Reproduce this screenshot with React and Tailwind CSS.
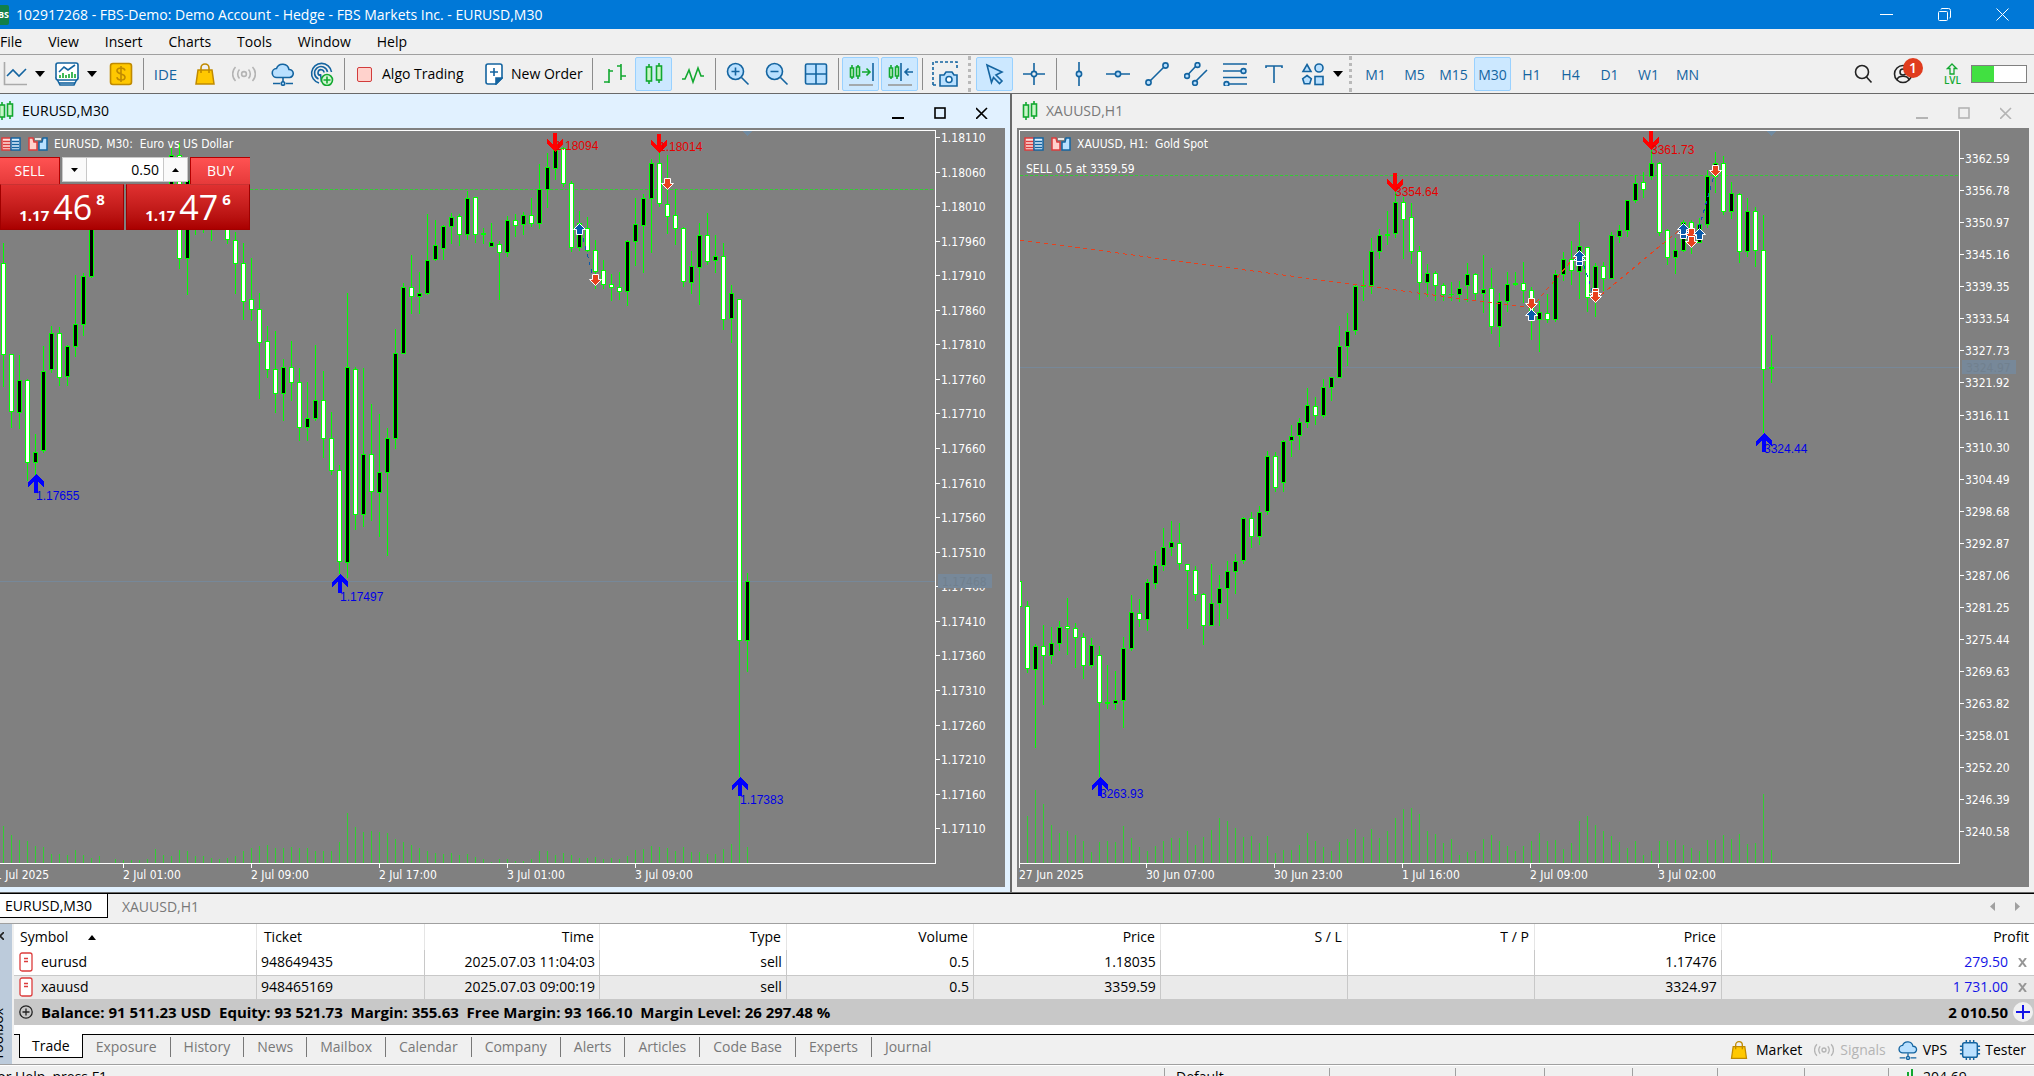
import React, { useState } from 'react';

const BLUE = '#1464a0';
const LIGHT = '#b9e0ff';
const GREEN = '#12a830';

// [high, bodyTop, bodyBottom, low, kind] - kind: 'w' bear, 'b' bull, 'd' doji
const EURUSD = [
    [243, 263, 355, 387, 'w'], [354, 354, 412, 428, 'w'], [355, 380, 413, 429, 'b'], [379, 380, 463, 481, 'w'],
    [434, 452, 463, 475, 'b'], [346, 371, 451, 453, 'b'], [326, 333, 370, 373, 'b'], [327, 333, 378, 386, 'w'],
    [345, 346, 377, 386, 'b'], [275, 324, 347, 357, 'b'], [273, 276, 325, 336, 'b'], [190, 200, 277, 278, 'b'],
    null, null, null, null, null, null, null, null, null,
    [147, 155, 200, 220, 'b'], [143, 155, 259, 269, 'w'], [160, 180, 259, 295, 'b'], [160, 190, 220, 235, 'b'],
    [160, 190, 220, 233, 'w'], [160, 190, 220, 241, 'b'], null, [190, 200, 240, 244, 'w'],
    [232, 240, 264, 294, 'w'], [243, 263, 302, 320, 'w'], [258, 299, 310, 321, 'w'], [293, 309, 343, 399, 'w'],
    [326, 341, 370, 378, 'w'], [331, 369, 394, 413, 'w'], [359, 367, 394, 421, 'b'], [341, 367, 383, 401, 'w'],
    [368, 382, 428, 441, 'w'], [382, 418, 428, 441, 'b'], [345, 400, 419, 421, 'b'], [371, 400, 439, 458, 'w'],
    [412, 438, 471, 475, 'w'], [465, 470, 562, 574, 'w'], [293, 367, 563, 578, 'b'], [367, 369, 515, 530, 'w'],
    [368, 454, 515, 527, 'b'], [404, 454, 492, 521, 'w'], [414, 472, 493, 537, 'b'], [428, 438, 473, 556, 'b'],
    [329, 353, 439, 449, 'b'], [283, 287, 354, 354, 'b'], [255, 287, 297, 314, 'w'], [272, 293, 297, 314, 'b'],
    [214, 260, 294, 295, 'b'], [220, 245, 260, 261, 'b'], [225, 226, 249, 260, 'b'], [213, 217, 227, 244, 'b'],
    [214, 216, 235, 246, 'w'], [191, 198, 235, 240, 'b'], [197, 197, 235, 243, 'w'], [228, 233, 235, 244, 'd'],
    [223, 242, 247, 247, 'b'], [241, 244, 253, 300, 'w'], [216, 220, 253, 257, 'b'], [214, 220, 226, 237, 'w'],
    [212, 215, 225, 235, 'b'], [198, 215, 224, 227, 'w'], [164, 189, 224, 229, 'b'], [153, 167, 190, 208, 'b'],
    [140, 145, 169, 180, 'b'], [147, 148, 184, 187, 'w'], [181, 183, 248, 252, 'w'], [211, 223, 248, 251, 'b'],
    [217, 228, 251, 252, 'w'], [240, 250, 272, 289, 'w'], [260, 270, 285, 289, 'w'], [274, 284, 288, 301, 'w'],
    [272, 287, 292, 300, 'w'], [240, 241, 292, 306, 'b'], [198, 224, 242, 266, 'b'], [194, 198, 226, 273, 'b'],
    [159, 163, 199, 253, 'b'], [152, 163, 204, 207, 'w'], [155, 204, 217, 234, 'w'], [189, 215, 229, 245, 'w'],
    [227, 228, 282, 287, 'w'], [251, 266, 283, 294, 'b'], [223, 235, 268, 305, 'b'], [213, 235, 262, 265, 'w'],
    [235, 256, 261, 273, 'b'], [243, 256, 320, 330, 'w'], [285, 293, 319, 343, 'b'], [299, 299, 641, 777, 'w'],
    [573, 581, 641, 672, 'b'],
];

const EURUSD_VOL = [
    37, 28, 23, 22, 17, 16, 9, 9, 8, 13, 8, 5, 7, 0, 4, 3, 3, 3, 4, 14, 8, 7, 13, 12, 7, 7, 5, 4, 5, 7, 12, 15, 17, 18,
    15, 15, 16, 15, 15, 12, 12, 12, 21, 50, 36, 31, 32, 31, 30, 24, 21, 18, 15, 12, 10, 9, 10, 8, 9, 6, 4, 1, 4, 4, 2,
    2, 4, 12, 12, 8, 10, 8, 5, 5, 6, 4, 5, 4, 7, 13, 14, 17, 16, 15, 12, 16, 11, 11, 9, 9, 14, 19, 73, 16,
];

const XAUUSD = [
    [581, 581, 607, 607, 'w'], [601, 606, 669, 673, 'w'], [644, 646, 670, 748, 'b'], [625, 646, 656, 705, 'w'],
    [627, 643, 656, 664, 'b'], [621, 627, 644, 651, 'b'], [598, 626, 629, 655, 'w'], [623, 628, 638, 668, 'w'],
    [633, 637, 666, 679, 'w'], [638, 645, 666, 668, 'b'], [646, 655, 703, 777, 'w'], [665, 702, 704, 709, 'd'],
    [671, 700, 704, 710, 'b'], [637, 648, 701, 728, 'b'], [595, 612, 649, 651, 'b'], [599, 613, 620, 627, 'w'],
    [579, 582, 620, 631, 'b'], [551, 565, 584, 589, 'b'], [528, 547, 566, 571, 'b'], [521, 542, 548, 556, 'b'],
    [523, 543, 564, 570, 'w'], [564, 564, 571, 629, 'w'], [566, 570, 595, 601, 'w'], [593, 594, 626, 645, 'w'],
    [564, 603, 626, 626, 'b'], [575, 588, 604, 626, 'b'], [561, 571, 589, 619, 'b'], [554, 561, 572, 594, 'b'],
    [517, 518, 561, 564, 'b'], [512, 518, 537, 548, 'w'], [506, 512, 537, 545, 'b'], [451, 456, 512, 515, 'b'],
    [452, 456, 488, 492, 'w'], [440, 441, 483, 492, 'b'], [425, 436, 441, 457, 'b'], [418, 422, 436, 450, 'b'],
    [388, 405, 423, 428, 'b'], [397, 406, 416, 425, 'w'], [379, 387, 416, 418, 'b'], [377, 377, 388, 401, 'b'],
    [326, 346, 378, 378, 'b'], [313, 331, 347, 366, 'b'], [284, 286, 331, 335, 'b'], [270, 285, 287, 301, 'd'],
    [238, 251, 286, 294, 'b'], [229, 235, 252, 259, 'b'], [211, 234, 236, 245, 'd'], [191, 202, 234, 238, 'b'],
    [197, 202, 220, 259, 'w'], [203, 217, 252, 264, 'w'], [246, 251, 283, 300, 'w'], [264, 273, 283, 297, 'b'],
    [271, 273, 286, 301, 'w'], [283, 285, 295, 301, 'w'], [282, 294, 295, 301, 'd'], [281, 288, 295, 302, 'b'],
    [263, 274, 286, 302, 'b'], [273, 274, 294, 301, 'w'], [255, 289, 294, 313, 'b'], [268, 288, 327, 334, 'w'],
    [293, 301, 327, 347, 'b'], [272, 284, 302, 312, 'b'], [272, 283, 285, 286, 'd'], [262, 283, 291, 303, 'w'],
    [287, 290, 317, 340, 'w'], [301, 312, 320, 352, 'b'], [294, 313, 320, 323, 'w'], [270, 274, 320, 322, 'b'],
    [252, 259, 275, 281, 'b'], [241, 259, 271, 285, 'w'], [222, 246, 272, 299, 'b'], [247, 247, 298, 312, 'w'],
    [263, 266, 297, 317, 'b'], [262, 266, 279, 291, 'w'], [232, 235, 279, 279, 'b'], [225, 230, 237, 243, 'b'],
    [200, 200, 231, 237, 'b'], [175, 183, 201, 203, 'b'], [172, 182, 190, 198, 'w'], [150, 163, 177, 180, 'b'],
    [162, 163, 233, 236, 'w'], [229, 230, 258, 265, 'w'], [238, 250, 258, 274, 'b'], [220, 222, 251, 252, 'b'],
    [220, 222, 245, 254, 'w'], [218, 224, 243, 243, 'b'], [170, 176, 225, 228, 'b'], [152, 163, 177, 193, 'b'],
    [156, 163, 212, 215, 'w'], [182, 193, 212, 219, 'b'], [193, 194, 252, 263, 'w'], [198, 211, 252, 257, 'b'],
    [207, 211, 251, 267, 'w'], [215, 250, 370, 433, 'w'], [335, 367, 369, 383, 'd'],
];

const XAUUSD_VOL = [
    0, 47, 73, 59, 38, 30, 32, 28, 22, 11, 21, 22, 21, 37, 25, 16, 12, 17, 22, 25, 25, 32, 18, 26, 33, 45, 42, 35, 26,
    27, 20, 27, 10, 13, 13, 18, 30, 22, 16, 12, 21, 24, 34, 26, 34, 25, 32, 45, 54, 55, 49, 32, 29, 20, 24, 8, 11, 12,
    24, 28, 22, 17, 12, 17, 22, 30, 22, 23, 14, 20, 42, 47, 38, 32, 27, 21, 15, 22, 8, 12, 22, 22, 23, 18, 15, 12, 23,
    23, 28, 24, 29, 19, 20, 69, 13,
];

const CHARTS = [
    {
        id: 'EURUSD,M30',
        header: 'EURUSD, M30:\u00a0 Euro vs US Dollar',
        x0: 3,
        candles: EURUSD,
        volumes: EURUSD_VOL,
        bid: 581,
        bidText: '1.17468',
        order: 189,
        shift: 747,
        signals: [
            { x: 555, y: 133, label: '1.18094', dy: 17 },
            { x: 659, y: 134, label: '1.18014', dy: 17 },
            { x: 36, y: 474, label: '1.17655', dy: 26, up: true },
            { x: 340, y: 574, label: '1.17497', dy: 27, up: true },
            { x: 740, y: 777, label: '1.17383', dy: 27, up: true },
        ],
        lines: [['#0a5aaa', 579, 223, 595, 284]],
        deals: [[667, 183], [579, 229, true], [595, 279]],
        scale: Array.from({ length: 21 }, (_, i) => [Math.round(137 + i * 34.56), (1.1811 - i * 0.0005).toFixed(5)]),
        times: [[-5, '1 Jul 2025'], [123, '2 Jul 01:00'], [251, '2 Jul 09:00'], [379, '2 Jul 17:00'], [507, '3 Jul 01:00'], [635, '3 Jul 09:00']],
    },
    {
        id: 'XAUUSD,H1',
        header: 'XAUUSD, H1:\u00a0 Gold Spot',
        x0: -1,
        candles: XAUUSD,
        volumes: XAUUSD_VOL,
        bid: 367,
        bidText: '3324.97',
        order: 175,
        orderText: 'SELL 0.5 at 3359.59',
        shift: 751,
        signals: [
            { x: 375, y: 173, label: '3354.64', dy: 23 },
            { x: 631, y: 131, label: '3361.73', dy: 23 },
            { x: 744, y: 433, label: '3324.44', dy: 20, up: true },
            { x: 80, y: 777, label: '3263.93', dy: 21, up: true },
        ],
        lines: [
            ['#e8401c', 0, 240, 511, 308], ['#e8401c', 511, 308, 559, 252], ['#e8401c', 575, 300, 663, 227],
            ['#0a5aaa', 559, 250, 575, 300], ['#0a5aaa', 663, 227, 671, 245], ['#0a5aaa', 679, 228, 695, 172],
        ],
        deals: [[511, 303], [511, 315, true], [559, 260, true], [559, 256, true], [575, 293], [575, 296], [663, 233, true], [663, 229, true], [671, 233], [671, 241], [679, 234, true], [695, 170]],
        scale: Array.from({ length: 22 }, (_, i) => [Math.round(158 + i * 32.07), (3362.59 - i * 5.81).toFixed(2)]),
        times: [[0, '27 Jun 2025'], [127, '30 Jun 07:00'], [255, '30 Jun 23:00'], [383, '1 Jul 16:00'], [511, '2 Jul 09:00'], [639, '3 Jul 02:00']],
    },
];

const CHART_FONT = "font-['DejaVu_Sans_Condensed','DejaVu_Sans',sans-serif]";

const Svg = ({ w = 24, h = 24, children, ...rest }) => (
    <svg width={w} height={h} viewBox={`0 0 ${w} ${h}`} fill="none" stroke={BLUE} strokeWidth="1.6" className="shrink-0" aria-hidden="true" {...rest}>
        {children}
    </svg>
);

const Caret = () => (
    <Svg w={10} h={6} stroke="none"><path d="M0 0h10l-5 6z" fill="#000" /></Svg>
);

const BagIcon = ({ size = 24 }) => (
    <Svg width={size} height={size} stroke="#c08a00">
        <path d="M5 8h14l2 14H3z" fill="#ffc800" strokeWidth="1.5" />
        <path d="M8 11V6a4 4 0 0 1 8 0v5" />
    </Svg>
);

const SignalIcon = ({ size = 24 }) => (
    <Svg width={size} height={size} stroke="#b4b4b4">
        <circle cx="12" cy="12" r="2.4" />
        <path d="M7.5 7.5a6.500 6.500 0 0 0 0 9M16.500 7.500a6.500 6.500 0 0 1 0 9M3.500 5a10 10 0 0 0 0 14M20.500 5a10 10 0 0 1 0 14" />
    </Svg>
);

const CloudIcon = ({ size = 24 }) => (
    <Svg width={size} height={size}>
        <path d="M6 15.500a4.500 4.500 0 0 1-.5-9A6.500 6.500 0 0 1 18 7.500a4 4 0 0 1 .5 8z" fill={LIGHT} />
        <path d="M12 16v4M2 21.500h7M15 21.500h7" />
        <circle cx="12" cy="21.500" r="1.800" fill={LIGHT} />
    </Svg>
);

const ChipIcon = () => (
    <Svg w={24} h={24} width={22} height={22}>
        <path d="M8 1v22M12 1v22M16 1v22M1 8h22M1 12h22M1 16h22" />
        <rect x="4" y="4" width="16" height="16" rx="2" fill={LIGHT} />
    </Svg>
);

const CandlesIcon = () => (
    <Svg stroke={GREEN}>
        <path d="M7 2v20M17 1v20" />
        <rect x="4.500" y="5" width="5" height="14" fill="#c8f5c8" />
        <rect x="14.500" y="4" width="5" height="14" fill="#c8f5c8" />
    </Svg>
);

const ICONS = {
    line: <Svg><path d="M1.500 0v22.500H24" stroke="#aaa" /><path d="M4 14l6-6 6 6 7-7" /></Svg>,
    indicators: (
        <Svg w={24} h={26}>
            <path d="M1 16l4 8h14l4-8" fill="#fff" /><path d="M4 22h16" />
            <rect x="1" y="2" width="22" height="17" rx="2" fill="#fff" />
            <path d="M4 11l5-5 4 3 7-5" />
            <path d="M5 17v-3M8 17v-5M11 17v-3M14 17v-4M17 17v-6M20 17v-4" stroke={GREEN} />
        </Svg>
    ),
    dollar: (
        <Svg stroke="#c08a00">
            <rect x="1.500" y="1.500" width="21" height="21" rx="2.500" fill="#ffc800" />
            <path d="M16 8.500c-.5-2-2-2.500-4-2.500-2.500 0-4 1-4 2.800C8 13 16 11 16 15.200c0 1.800-1.500 2.800-4 2.800-2.200 0-3.800-.8-4-2.800M12 4v16" />
        </Svg>
    ),
    bag: <BagIcon />,
    signal: <SignalIcon />,
    cloud: <CloudIcon />,
    globe: (
        <Svg>
            <path d="M9 21A10 10 0 1 1 21.500 10M8.500 17A6.500 6.500 0 1 1 17.500 10M10 13.500A3 3 0 1 1 14 10.500M10.500 12l1 8" />
            <circle cx="17" cy="18" r="5.500" stroke={GREEN} fill="#d5f7d5" /><path d="M17 14.500v7M13.500 18h7" stroke={GREEN} />
        </Svg>
    ),
    bars: <Svg stroke={GREEN}><path d="M6 7v14M6 9h4M1 20h5M18 2v16M18 14h5M14 4h4" /></Svg>,
    candles: <CandlesIcon />,
    zigzag: <Svg stroke={GREEN}><path d="M1 17h3l4-9 4 12 5-14 3 8h3" /></Svg>,
    zoomIn: <Svg><circle cx="9.500" cy="9.500" r="8" fill={LIGHT} /><path d="M15.500 15.500l7 7M5.500 9.500h8M9.500 5.500v8" /></Svg>,
    zoomOut: <Svg><circle cx="9.500" cy="9.500" r="8" fill={LIGHT} /><path d="M15.500 15.500l7 7M5.500 9.500h8" /></Svg>,
    grid: <Svg><rect x="1.500" y="2" width="21" height="20" rx="1.500" fill={LIGHT} /><path d="M12 2v20M1.500 12h21" /></Svg>,
    scroll: (
        <Svg w={26} h={24}>
            <path d="M4 3v14M10 3v14" stroke={GREEN} /><path d="M2.500 6h3v9h-3zM8.500 5h3v9h-3z" stroke={GREEN} fill="#c8f5c8" />
            <path d="M14 10h8M18.500 6.500l3.500 3.500-3.500 3.500" stroke={GREEN} /><path d="M25 1v18" /><path d="M1 23h24" stroke="#999" />
        </Svg>
    ),
    shift: (
        <Svg w={26} h={24}>
            <path d="M4 3v14M10 3v14" stroke={GREEN} /><path d="M2.500 6h3v9h-3zM8.500 5h3v9h-3z" stroke={GREEN} fill="#c8f5c8" />
            <path d="M14 1v18M26 10h-8M21.500 6.500L18 10l3.500 3.500" /><path d="M1 23h24" stroke="#999" />
        </Svg>
    ),
    camera: (
        <Svg w={26} h={26}>
            <path d="M1 24V1h24v8M1 24h5" strokeDasharray="3 2" />
            <path d="M8 14h4l2-3h6l2 3h3v11H8z" fill={LIGHT} /><circle cx="17" cy="18.500" r="3" fill="#fff" />
        </Svg>
    ),
    cursor: <Svg><path d="M4 3l15 7-6 3 6 6-2.500 2.500-6-6-2 5z" fill={LIGHT} /></Svg>,
    cross: <Svg><path d="M12 1v8M12 15v8M1 12h8M15 12h8" /><circle cx="12" cy="12" r="2.600" /></Svg>,
    vline: <Svg><path d="M12 0v9M12 15v9" /><circle cx="12" cy="12" r="2.600" fill={LIGHT} /></Svg>,
    hline: <Svg><path d="M0 12h9M15 12h9" /><circle cx="12" cy="12" r="2.600" fill={LIGHT} /></Svg>,
    trend: <Svg><path d="M5 19L19 5" /><circle cx="3.500" cy="20.500" r="2.600" fill={LIGHT} /><circle cx="20.500" cy="3.500" r="2.600" fill={LIGHT} /></Svg>,
    channel: (
        <Svg>
            <path d="M4.500 12L12 4M12 19L23 8" />
            <circle cx="3" cy="14" r="2.400" fill={LIGHT} /><circle cx="13.500" cy="3" r="2.400" fill={LIGHT} /><circle cx="11" cy="21" r="2.400" fill={LIGHT} />
        </Svg>
    ),
    fibo: (
        <Svg>
            <path d="M0 2h24M0 9h18M0 15.500h24M6 22h18" />
            <circle cx="20.500" cy="9" r="2.400" fill={LIGHT} /><circle cx="3.500" cy="22" r="2.400" fill={LIGHT} />
        </Svg>
    ),
    text: <Svg><path d="M4 6V4h16v2M12 4v17" /></Svg>,
    shapes: (
        <Svg>
            <path d="M6 2.500l4 7H2z" fill={LIGHT} /><circle cx="18" cy="6" r="4" fill={LIGHT} />
            <path d="M6 13.500l4.300 3.200-1.600 5H3.300l-1.600-5z" fill={LIGHT} /><rect x="14" y="14.500" width="8" height="8" fill={LIGHT} />
        </Svg>
    ),
};

const ToolButton = ({ icon, label, active, children }) => (
    <button
        type="button"
        aria-label={label}
        className={`h-[34px] w-[37px] mx-px shrink-0 flex items-center justify-center rounded-[2px] border ${active ? 'bg-[#cce8ff] border-[#99d1ff]' : 'border-transparent'}`}
    >
        {icon ? ICONS[icon] : children}
    </button>
);

const Sep = () => <span className="w-px h-8 ml-[3px] mr-[2px] shrink-0 bg-[#8c8c8c]" />;
const Grip = () => <span className="w-0 h-9 mx-1 shrink-0 border-l-[3px] border-dotted border-[#b9b9b9]" />;

const Toolbar = () => {
    const [frame, setFrame] = useState('M30');
    return (
        <div className="h-[39px] shrink-0 flex items-center border-b border-[#696969] pr-[7px] text-[#1464a0]">
            <button type="button" aria-label="Chart type" className="flex items-center gap-2 pl-[3px] w-[55px]">{ICONS.line}<Caret /></button>
            <button type="button" aria-label="Indicators" className="flex items-center gap-2 w-[46px]">{ICONS.indicators}<Caret /></button>
            <ToolButton icon="dollar" label="Symbols" />
            <Sep />
            <ToolButton label="MetaEditor"><span className="text-[15px]">IDE</span></ToolButton>
            <ToolButton icon="bag" label="Market" />
            <ToolButton icon="signal" label="Signals" />
            <ToolButton icon="cloud" label="VPS" />
            <ToolButton icon="globe" label="Web" />
            <Sep />
            <button type="button" className="flex items-center gap-[10px] w-[127px] pl-[10px] text-black">
                <span className="size-[15px] rounded-[2px] border border-[#d23c3c] bg-[#ffd2cc]" />Algo Trading
            </button>
            <button type="button" className="flex items-center gap-2 w-[115px] pl-[11px] text-black">
                <Svg w={18} h={22}>
                    <path d="M3 1h12a2 2 0 0 1 2 2v12l-6 6H3a2 2 0 0 1-2-2V3a2 2 0 0 1 2-2z" fill="#fff" />
                    <path d="M17 15h-6v6zM9 5v8M5 9h8" fill={BLUE} />
                </Svg>
                New Order
            </button>
            <Sep />
            <ToolButton icon="bars" label="Bar chart" />
            <ToolButton icon="candles" label="Candlesticks" active />
            <ToolButton icon="zigzag" label="Line chart" />
            <Sep />
            <ToolButton icon="zoomIn" label="Zoom in" />
            <ToolButton icon="zoomOut" label="Zoom out" />
            <ToolButton icon="grid" label="Tile windows" />
            <Sep />
            <ToolButton icon="scroll" label="Auto scroll" active />
            <ToolButton icon="shift" label="Chart shift" active />
            <Sep />
            <ToolButton icon="camera" label="Screenshot" />
            <Grip />
            <ToolButton icon="cursor" label="Cursor" active />
            <ToolButton icon="cross" label="Crosshair" />
            <Sep />
            <ToolButton icon="vline" label="Vertical line" />
            <ToolButton icon="hline" label="Horizontal line" />
            <ToolButton icon="trend" label="Trendline" />
            <ToolButton icon="channel" label="Channel" />
            <ToolButton icon="fibo" label="Fibonacci" />
            <ToolButton icon="text" label="Text" />
            <button type="button" aria-label="Objects" className="flex items-center gap-2 w-[52px] pl-2">{ICONS.shapes}<Caret /></button>
            <Grip />
            {['M1', 'M5', 'M15', 'M30', 'H1', 'H4', 'D1', 'W1', 'MN'].map((f) => (
                <button
                    key={f}
                    type="button"
                    onClick={() => setFrame(f)}
                    className={`w-[37px] mx-px h-[34px] pt-[2px] rounded-[2px] border ${f === frame ? 'bg-[#cce8ff] border-[#99d1ff]' : 'border-transparent'}`}
                >
                    {f}
                </button>
            ))}
            <div className="ml-auto flex items-center">
                <button type="button" aria-label="Search" className="mr-5">
                    <Svg w={20} h={20} stroke="#222"><circle cx="9" cy="8" r="6.500" /><path d="M13.500 13l5 5.500" /></Svg>
                </button>
                <button type="button" aria-label="Account" className="relative mr-[31px]">
                    <Svg w={20} h={20} stroke="#222"><circle cx="10" cy="10" r="8.500" /><circle cx="10" cy="8" r="3" /><path d="M4 16c1-5 11-5 12 0" /></Svg>
                    <span className="absolute -top-[6px] left-[10px] size-[20px] rounded-full bg-[#e03c1e] text-white font-semibold leading-[20px] text-center">1</span>
                </button>
                <span className="flex flex-col items-center mr-[10px] text-[#12a830] text-[10px] leading-[10px] font-semibold">
                    <Svg w={12} h={12} stroke={GREEN}><path d="M6 1l4.500 4.500H8V11H4V5.500H1.500z" strokeWidth="1.300" /></Svg>
                    LVL
                </span>
                <span className="w-[56px] h-[18px] border border-[#808080] bg-white flex"><span className="w-[22px] bg-[#41e041]" /></span>
            </div>
        </div>
    );
};

const SignalArrow = ({ x, y, label, dy, up }) => (
    <g fill={up ? '#0000ff' : '#ff0000'}>
        <path
            d={up
                ? `M${x} ${y}l8 8v5l-6-5v11h-4v-11l-6 5v-5z`
                : `M${x} ${y + 19}l8 -8v-5l-6 5v-11h-4v11l-6 -5v5z`}
        />
        <text x={x} y={y + dy} className="text-[12px] font-['Liberation_Sans',sans-serif]" fill={up ? '#0000e6' : '#e60000'}>{label}</text>
    </g>
);

const Deal = ({ x, y, up }) => (
    <path
        d={up ? `M${x} ${y - 6}l6 6h-3v5h-6v-5h-3z` : `M${x} ${y + 6}l6 -6h-3v-5h-6v5h-3z`}
        fill={up ? '#0a5aaa' : '#e8401c'}
        stroke="#fff"
        transform="translate(.5 .5)"
    />
);

const Candle = ({ x, data }) => {
    const [high, top, bottom, low, kind] = data;
    return (
        <g>
            <rect x={x} y={high} width="1" height={low - high} fill="#00ff00" />
            <rect x={x - 2} y={top} width="5" height={bottom - top} fill="#00ff00" />
            {kind !== 'd' && (
                <rect x={x - 1} y={top + 1} width="3" height={Math.max(bottom - top - 2, 1)} fill={kind === 'w' ? '#fff' : '#000'} />
            )}
        </g>
    );
};

const OneClick = () => (
    <div className="absolute left-0 top-[26px] w-[250px] text-white">
        <div className="flex">
            <button type="button" className="w-[60px] shrink-0 h-[27px] bg-linear-to-b from-[#ff5252] to-[#e63a3a] border-t border-r border-[#b40000]">SELL</button>
            <div className="flex-1 min-w-0 h-[25px] mx-[2px] flex border border-[#c8c8c8] bg-white text-black">
                <button type="button" aria-label="Decrease volume" className="w-6 shrink-0 flex items-center justify-center border-r border-[#c8c8c8] bg-[#fafafa]">
                    <Svg w={7} h={4} stroke="none"><path d="M0 0h7L3.500 4z" fill="#000" /></Svg>
                </button>
                <input aria-label="Volume" defaultValue="0.50" className="flex-1 min-w-0 text-right pr-1 outline-none" />
                <button type="button" aria-label="Increase volume" className="w-6 shrink-0 flex items-center justify-center border-l border-[#c8c8c8] bg-[#fafafa]">
                    <Svg w={7} h={4} stroke="none"><path d="M0 4h7L3.500 0z" fill="#000" /></Svg>
                </button>
            </div>
            <button type="button" className="w-[60px] shrink-0 h-[27px] bg-linear-to-b from-[#ff5252] to-[#e63a3a] border-t border-l border-[#b40000]">BUY</button>
        </div>
        <div className="flex gap-[2px]">
            {[['46', '8'], ['47', '6']].map(([big, small]) => (
                <button key={big} type="button" className="flex-1 h-[46px] flex items-start justify-center bg-linear-to-b from-[#e03030] to-[#aa0000] border border-t-[#c83232] border-[#a00000] font-bold">
                    <span className="mt-5 text-[15px] leading-5">1.17</span>
                    <span className="mx-1 text-[34px] leading-[44px] font-normal">{big}</span>
                    <span className="mt-1 text-[15px] leading-5">{small}</span>
                </button>
            ))}
        </div>
    </div>
);

const WindowButtons = ({ color }) => (
    <div className="ml-auto flex items-center gap-[30px] pt-1">
        <button type="button" aria-label="Minimize"><Svg w={12} h={12} stroke={color}><path d="M0 11h12" strokeWidth="2" /></Svg></button>
        <button type="button" aria-label="Maximize"><Svg w={12} h={12} stroke={color}><rect x="1" y="1" width="10" height="10" /></Svg></button>
        <button type="button" aria-label="Close"><Svg w={12} h={12} stroke={color}><path d="M0 1l11 11M11 1L0 12" /></Svg></button>
    </div>
);

const ChartWindow = ({ chart, active }) => (
    <section className={`flex flex-col min-w-0 pb-[5px] pr-[5px] ${active ? 'bg-[#e1f1ff]' : 'bg-[#f0f0f0] border-l-2 border-[#696969] pl-[5px]'}`}>
        <header className={`h-[34px] shrink-0 flex items-center pb-px pr-[17px] ${active ? 'text-black' : 'text-[#787878] pl-[5px]'}`}>
            <Svg w={16} h={20} stroke={GREEN} className={`shrink-0 ${active ? '-ml-[2px] mr-2' : 'mr-2'}`}>
                <path d="M4 1v18M12 0v18" /><rect x="1.500" y="4" width="5" height="12" fill="#c8f5c8" /><rect x="9.500" y="3" width="5" height="12" fill="#c8f5c8" />
            </Svg>
            {chart.id}
            <WindowButtons color={active ? '#000' : '#b4b4b4'} />
        </header>
        <div className={`flex-1 min-h-0 bg-[#808080] pt-[2px] grid grid-rows-[minmax(0,1fr)_23px] grid-cols-[minmax(0,1fr)_69px] ${active ? '' : 'pl-[2px]'} ${CHART_FONT}`}>
            <div className={`relative overflow-hidden border-y border-r border-white ${active ? '' : 'border-l'}`}>
                <svg className="block w-full h-full" role="img" aria-label={chart.id} shapeRendering="crispEdges">
                    <g transform="translate(0 -131)">
                        <rect y={chart.bid} width="100%" height="1" fill="#778899" />
                        <line y1={chart.order} y2={chart.order} x2="100%" stroke="#32cd32" strokeDasharray="3 2" transform="translate(0 .5)" />
                        <path d={`M${chart.shift - 5} 131h10l-5 5z`} fill="#708aa0" />
                        {chart.volumes.map((v, i) => <rect key={i} x={chart.x0 + i * 8} y={863 - v} width="1" height={v} fill="#32cd32" />)}
                        {chart.candles.map((c, i) => c && <Candle key={i} x={chart.x0 + i * 8} data={c} />)}
                        {chart.signals.map((s) => <SignalArrow key={s.label} {...s} />)}
                        {chart.lines.map(([c, x1, y1, x2, y2]) => (
                            <line key={`${x1}-${y1}`} x1={x1} y1={y1} x2={x2} y2={y2} stroke={c} strokeDasharray="4 4" />
                        ))}
                        <g shapeRendering="auto">
                            {chart.deals.map(([x, y, up]) => <Deal key={`${x}-${y}`} x={x} y={y} up={up} />)}
                        </g>
                    </g>
                </svg>
                <div className="absolute left-0 top-0 p-[6px] text-white text-[12px] leading-[14px]">
                    <div className={`flex items-center ${active ? '-ml-[5px]' : '-ml-[2px]'}`}>
                        <Svg w={20} h={14} strokeWidth="1.500">
                            <rect x="1" y="1" width="9" height="12" fill="#ffe0dc" stroke="#dc3c3c" /><rect x="10" y="1" width="9" height="12" fill="#e0f0ff" />
                            <path d="M2 4.500h7M2 7.500h7M2 10.500h7" stroke="#dc3c3c" /><path d="M11 4.500h7M11 7.500h7M11 10.500h7" />
                        </Svg>
                        <Svg w={20} h={14} className="ml-[7px] mr-[6px]" strokeWidth="1.500">
                            <path d="M1 1h4l1 4h3v8H1z" fill="#ffd2cc" stroke="#dc3c3c" /><path d="M19 1h-4l-1 4h-3v8h8z" fill={LIGHT} />
                            <path d="M7 2h6" stroke="#e6e6e6" strokeWidth="2" />
                        </Svg>
                        {chart.header}
                    </div>
                    {chart.orderText && <div className="mt-[11px]">{chart.orderText}</div>}
                </div>
                {active && <div className="font-['Open_Sans',sans-serif]"><OneClick /></div>}
            </div>
            <svg className="block w-full h-full text-[12px]">
                <g transform="translate(0 -130)" fill="#fff">
                    {chart.scale.map(([y, price]) => (
                        <g key={price}>
                            <rect y={y} width="4" height="1" />
                            <text x="5" y={y + 5}>{price}</text>
                        </g>
                    ))}
                    <rect x="2" y={chart.bid - 7} width="54" height="14" fill="#778899" />
                    <text x="6" y={chart.bid + 5} fill="#71808e">{chart.bidText}</text>
                </g>
            </svg>
            <svg className="block w-full h-full text-[12px] col-span-2">
                <g fill="#fff">
                    {chart.times.map(([x, t]) => (
                        <g key={t}>
                            <rect x={x} width="1" height="4" />
                            <text x={x} y="15">{t}</text>
                        </g>
                    ))}
                </g>
            </svg>
        </div>
    </section>
);

const POSITIONS = [
    { symbol: 'eurusd', cells: ['948649435', '2025.07.03 11:04:03', 'sell', '0.5', '1.18035', '', '', '1.17476'], profit: '279.50' },
    { symbol: 'xauusd', cells: ['948465169', '2025.07.03 09:00:19', 'sell', '0.5', '3359.59', '', '', '3324.97'], profit: '1 731.00' },
];

const HEADERS = ['Ticket', 'Time', 'Type', 'Volume', 'Price', 'S / L', 'T / P', 'Price'];
const TABS = ['Exposure', 'History', 'News', 'Mailbox', 'Calendar', 'Company', 'Alerts', 'Articles', 'Code Base', 'Experts', 'Journal'];

const Positions = () => (
    <table className="w-full table-fixed border-collapse bg-white leading-[18px]">
        <colgroup>
            <col className="w-[12%]" />
            <col className="w-[168px]" />
            <col className="w-[175px]" />
            <col className="w-[187px]" />
            <col className="w-[187px]" />
            <col className="w-[187px]" />
            <col className="w-[187px]" />
            <col className="w-[187px]" />
            <col className="w-[187px]" />
            <col />
        </colgroup>
        <thead>
            <tr className="h-[26px]">
                <th className="font-normal text-left pl-[6px] border-r border-[#e5e5e5]">
                    <span className="flex items-center gap-5">Symbol <Svg w={8} h={5} stroke="none"><path d="M0 5h8L4 0z" fill="#000" /></Svg></span>
                </th>
                {HEADERS.map((h, i) => (
                    <th key={i} className={`font-normal border-r border-[#e5e5e5] ${i === 0 ? 'text-left pl-[7px]' : 'text-right pr-[5px]'}`}>{h}</th>
                ))}
                <th className="font-normal text-right pr-[5px]">Profit</th>
            </tr>
        </thead>
        <tbody>
            {POSITIONS.map((p, n) => (
                <tr key={p.symbol} className={n ? 'h-6 bg-[#eaeaea]' : 'h-[25px] border-b border-[#c8c8c8]'}>
                    <td className="pl-[5px] border-r border-[#c8c8c8]">
                        <span className="flex items-center gap-2">
                            <Svg w={14} h={20} stroke="#dc3c3c" strokeWidth="1.300"><rect x="1" y="1" width="12" height="18" rx="2" fill="#fff" /><path d="M5 6.500h4M5 9.500h4" /></Svg>
                            {p.symbol}
                        </span>
                    </td>
                    {p.cells.map((c, i) => (
                        <td key={i} className={`border-r border-[#c8c8c8] ${i === 0 ? 'pl-1' : 'text-right pr-1'}`}>{c}</td>
                    ))}
                    <td className="pr-[7px]">
                        <span className="flex items-center justify-end gap-[10px] text-[#1414e6]">
                            {p.profit}
                            <button type="button" aria-label={`Close ${p.symbol}`}>
                                <Svg w={9} h={9} stroke="#969696" strokeWidth="2"><path d="M1 0l7 9M8 0L1 9" /></Svg>
                            </button>
                        </span>
                    </td>
                </tr>
            ))}
        </tbody>
        <tfoot>
            <tr className="h-[26px] bg-[#c8c8c8] font-bold">
                <td colSpan={9} className="pl-[5px]">
                    <span className="flex items-center gap-2">
                        <Svg w={14} h={14} stroke="#222" strokeWidth="1.300"><circle cx="7" cy="7" r="6.200" /><path d="M7 3.500v7M3.500 7h7" /></Svg>
                        <span className="whitespace-pre text-[15px]">{'Balance: 91 511.23 USD  Equity: 93 521.73  Margin: 355.63  Free Margin: 93 166.10  Margin Level: 26 297.48 %'}</span>
                    </span>
                </td>
                <td className="pr-px">
                    <span className="flex items-center justify-end gap-[5px] text-[15px]">
                        2 010.50
                        <button type="button" aria-label="Add" className="size-5 rounded-full bg-[#f0f0f0] flex items-center justify-center">
                            <Svg w={14} h={14} stroke="#1414e6" strokeWidth="2"><path d="M7 0v14M0 7h14" /></Svg>
                        </button>
                    </span>
                </td>
            </tr>
        </tfoot>
    </table>
);

const App = () => (
    <div className="h-screen min-h-[600px] flex flex-col overflow-hidden bg-[#f0f0f0] text-black text-[14px] leading-[18px] font-['Open_Sans',sans-serif]">
        <div className="h-[29px] shrink-0 flex items-center bg-[#0078d7] text-white">
            <span className="w-[9px] h-5 mr-[7px] overflow-hidden flex justify-end items-center rounded-r-[2px] bg-[#128048] text-[9px] font-bold">BS</span>
            102917268 - FBS-Demo: Demo Account - Hedge - FBS Markets Inc. - EURUSD,M30
            <div className="ml-auto flex items-center gap-[45px] pr-[25px]">
                <button type="button" aria-label="Minimize window"><Svg w={13} h={13} stroke="#fff" strokeWidth="1"><path d="M0 6.500h13" /></Svg></button>
                <button type="button" aria-label="Restore window"><Svg w={13} h={13} stroke="#fff" strokeWidth="1"><rect x=".5" y="3.500" width="9" height="9" rx="1" /><path d="M3 1.500a1 1 0 0 1 1-1h6.500a2 2 0 0 1 2 2V9a1 1 0 0 1-1 1" /></Svg></button>
                <button type="button" aria-label="Close window"><Svg w={13} h={13} stroke="#fff" strokeWidth="1"><path d="M.5.5l12 12M12.500.5l-12 12" /></Svg></button>
            </div>
        </div>
        <nav className="h-[26px] shrink-0 flex items-center gap-[26px] border-b border-[#a0a0a0]">
            {['File', 'View', 'Insert', 'Charts', 'Tools', 'Window', 'Help'].map((m) => <button key={m} type="button">{m}</button>)}
        </nav>
        <Toolbar />
        <main className="flex-1 min-h-0 grid grid-rows-[minmax(0,1fr)] grid-cols-[1010fr_1024fr] border-b border-[#696969]">
            {CHARTS.map((c, i) => <ChartWindow key={c.id} chart={c} active={i === 0} />)}
        </main>
        <div className="h-[31px] shrink-0 flex items-start border-t border-black border-b border-b-[#a0a0a0]">
            <button type="button" className="h-6 pl-[5px] pr-[15px] bg-white border-r border-b border-black">EURUSD,M30</button>
            <button type="button" className="h-[25px] pl-[14px] text-[#787878]">XAUUSD,H1</button>
            <div className="ml-auto h-6 flex items-center gap-5 pr-[14px]">
                <Svg w={5} h={9} stroke="none"><path d="M5 0v9L0 4.500z" fill="#a0a0a0" /></Svg>
                <Svg w={5} h={9} stroke="none"><path d="M0 0v9l5-4.500z" fill="#a0a0a0" /></Svg>
            </div>
        </div>
        <div className="shrink-0 flex border-b border-[#a0a0a0]">
            <div className="w-3 mr-[2px] shrink-0 flex flex-col items-center justify-between overflow-hidden bg-[#bccbdb] pt-2 pb-1">
                <button type="button" aria-label="Close toolbox" className="-ml-3"><Svg w={8} h={8} stroke="#222"><path d="M0 0l8 8M8 0L0 8" /></Svg></button>
                <span className="[writing-mode:vertical-rl] rotate-180 -ml-4 leading-[14px]">Toolbox</span>
            </div>
            <div className="flex-1 min-w-0">
                <Positions />
                <div className="h-[9px] bg-white" />
                <div className="h-[30px] flex items-start border-t border-black">
                    <button type="button" className="h-6 ml-[5px] -mt-px px-3 bg-white border-x border-b border-black">Trade</button>
                    <div className="flex items-center pt-[2px] divide-x divide-[#787878] text-[#787878]">
                        {TABS.map((t) => <button key={t} type="button" className="h-5 px-[13px]">{t}</button>)}
                    </div>
                    <div className="ml-auto h-[29px] flex items-center gap-3 pr-2">
                        <a href="#market" className="flex items-center gap-[7px]"><BagIcon size={20} />Market</a>
                        <a href="#signals" className="flex items-center gap-[6px] text-[#b4b4b4]"><SignalIcon size={20} />Signals</a>
                        <a href="#vps" className="flex items-center gap-[5px]"><CloudIcon size={20} />VPS</a>
                        <a href="#tester" className="flex items-center gap-1"><ChipIcon />Tester</a>
                    </div>
                </div>
            </div>
        </div>
        <footer className="h-[11px] shrink-0 pt-[2px] flex overflow-hidden border-t border-white">
            <span className="flex-1 -ml-[10px] whitespace-nowrap">For Help, press F1</span>
            <span className="w-[165px] pl-[11px] border-l border-[#a0a0a0]">Default</span>
            <span className="w-[126px] border-l border-[#a0a0a0]" />
            <span className="w-[89px] border-l border-[#a0a0a0]" />
            <span className="w-[88px] border-l border-[#a0a0a0]" />
            <span className="w-[85px] border-l border-[#a0a0a0]" />
            <span className="w-[87px] border-l border-[#a0a0a0]" />
            <span className="w-[84px] border-l border-[#a0a0a0]" />
            <span className="w-[146px] pl-[18px] flex gap-2 border-l border-[#a0a0a0]">
                <Svg w={8} h={14} stroke={GREEN} strokeWidth="2"><path d="M1 4v10M5 1v13" /></Svg>204.69
            </span>
        </footer>
    </div>
);

export default App;
